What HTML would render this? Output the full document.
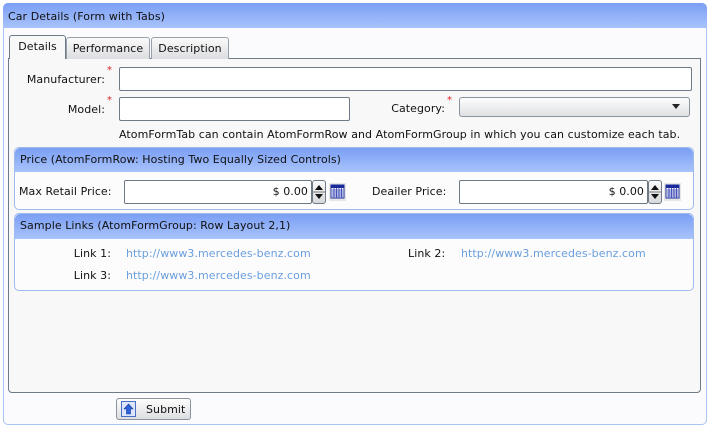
<!DOCTYPE html>
<html><head><meta charset="utf-8"><style>
*{box-sizing:border-box;margin:0;padding:0}
body{width:709px;height:428px;background:#fff;font-family:"DejaVu Sans","Liberation Sans",sans-serif;font-size:11px;letter-spacing:0.07px;color:#111;position:relative;overflow:hidden}
.a{position:absolute}
.outer{left:3px;top:3px;width:704px;height:422px;border:1px solid #a9c3f2;border-radius:5px;background:#fbfbfd}
.hdr{left:3px;top:3px;width:704px;height:25px;border-radius:5px 5px 0 0;background:linear-gradient(#7b9ff4,#a8c3fb)}
.box{left:8px;top:58px;width:693px;height:335px;border:1px solid #6d7a88;border-radius:0 0 4px 4px;background:#f8f8f9}
.tab{height:22px;border:1px solid #98a0ab;border-bottom:none;border-radius:3px 3px 0 0;background:linear-gradient(#fafafa,#dcdde0);text-align:center;line-height:21px}
.inp{height:24px;border:1px solid #6d7a88;border-radius:2px;background:#fff}
.lbl{text-align:right}
.star{color:#e02020;font-size:10px;position:absolute}
.grp{border:1px solid #9fbbee;border-radius:5px;background:#fcfcfd}
.gh{border-radius:5px 5px 0 0;background:linear-gradient(#7b9ff4 0,#88a9f6 30%,#a9c4fb);height:24px;line-height:24px;padding-left:5px}
.lnk{color:#6a9edc}
.spin{width:14px;height:24px;border:1px solid #6d7a88;border-radius:3px;background:linear-gradient(#fafafa,#d7d8db)}
.cal{width:17px;height:18px}
</style></head><body>
<div class="a outer"></div>
<div class="a hdr"></div>
<div class="a" style="left:8px;top:10px">Car Details (Form with Tabs)</div>
<div class="a box"></div>
<div class="a tab" style="left:66px;top:37px;width:84px">Performance</div>
<div class="a tab" style="left:151px;top:37px;width:78px">Description</div>
<div class="a tab" style="left:9px;top:35px;width:57px;height:24px;background:#f8f8f9;border-color:#6d7a88">Details</div>

<div class="a lbl" style="left:10px;top:73px;width:95px">Manufacturer:</div><span class="star" style="left:107px;top:65px">*</span>
<div class="a inp" style="left:119px;top:67px;width:573px"></div>
<div class="a lbl" style="left:10px;top:103px;width:95px">Model:</div><span class="star" style="left:107px;top:95px">*</span>
<div class="a inp" style="left:119px;top:97px;width:231px"></div>
<div class="a lbl" style="left:360px;top:102px;width:85px">Category:</div><span class="star" style="left:447px;top:95px">*</span>
<div class="a" style="left:459px;top:97px;width:231px;height:20px;border:1px solid #8a939e;border-radius:3px;background:linear-gradient(#fdfdfd,#dfe0e3)"><span style="position:absolute;right:9px;top:6px;border-left:4px solid transparent;border-right:4px solid transparent;border-top:5px solid #222"></span></div>
<div class="a" style="left:119px;top:128px">AtomFormTab can contain AtomFormRow and AtomFormGroup in which you can customize each tab.</div>

<div class="a grp" style="left:14px;top:147px;width:680px;height:63px"><div class="gh">Price (AtomFormRow: Hosting Two Equally Sized Controls)</div></div>
<div class="a" style="left:19px;top:185px">Max Retail Price:</div>
<div class="a inp" style="left:124px;top:180px;width:188px;text-align:right;padding:4px 3px 0 0">$ 0.00</div>
<div class="a spin" style="left:312px;top:180px"><svg width="12" height="22"><path d="M2 9L6 4L10 9Z M2 13L6 18L10 13Z" fill="#111"/><path d="M0 11H12" stroke="#777"/></svg></div>
<svg class="a cal" style="left:329px;top:183px" viewBox="0 0 17 18"><rect x="0" y="0" width="17" height="18" fill="#e6e6e6"/><rect x="2" y="2" width="13" height="13" fill="#fff" stroke="#1a2a9a"/><rect x="2" y="2" width="13" height="3" fill="#1a2a9a"/><path d="M3 7H14M3 9H14M3 11H14M3 13H14M5 5V15M7.5 5V15M10 5V15M12.5 5V15" stroke="#2a3ab0" stroke-width=".8"/></svg>
<div class="a" style="left:372px;top:185px">Deailer Price:</div>
<div class="a inp" style="left:459px;top:180px;width:189px;text-align:right;padding:4px 3px 0 0">$ 0.00</div>
<div class="a spin" style="left:648px;top:180px"><svg width="12" height="22"><path d="M2 9L6 4L10 9Z M2 13L6 18L10 13Z" fill="#111"/><path d="M0 11H12" stroke="#777"/></svg></div>
<svg class="a cal" style="left:664px;top:183px" viewBox="0 0 17 18"><rect x="0" y="0" width="17" height="18" fill="#e6e6e6"/><rect x="2" y="2" width="13" height="13" fill="#fff" stroke="#1a2a9a"/><rect x="2" y="2" width="13" height="3" fill="#1a2a9a"/><path d="M3 7H14M3 9H14M3 11H14M3 13H14M5 5V15M7.5 5V15M10 5V15M12.5 5V15" stroke="#2a3ab0" stroke-width=".8"/></svg>

<div class="a grp" style="left:14px;top:213px;width:680px;height:78px"><div class="gh" style="height:25px">Sample Links (AtomFormGroup: Row Layout 2,1)</div></div>
<div class="a lbl" style="left:40px;top:247px;width:71px">Link 1:</div>
<div class="a lnk" style="left:126px;top:247px">http://www3.mercedes-benz.com</div>
<div class="a" style="left:408px;top:247px">Link 2:</div>
<div class="a lnk" style="left:461px;top:247px">http://www3.mercedes-benz.com</div>
<div class="a lbl" style="left:40px;top:269px;width:71px">Link 3:</div>
<div class="a lnk" style="left:126px;top:269px">http://www3.mercedes-benz.com</div>

<div class="a" style="left:116px;top:398px;width:75px;height:22px;border:1px solid #8a939e;border-radius:3px;background:linear-gradient(#fdfdfd,#dcdde0)">
<svg style="position:absolute;left:4px;top:2px" width="15" height="16"><rect x=".5" y=".5" width="14" height="15" fill="#dbe6fa" stroke="#4a6ec8"/><path d="M7.5 3L12 8H9.5V13H5.5V8H3Z" fill="#2f62d8" stroke="#163a9a" stroke-width=".6"/></svg>
<span style="position:absolute;left:29px;top:4px">Submit</span></div>
</body></html>
